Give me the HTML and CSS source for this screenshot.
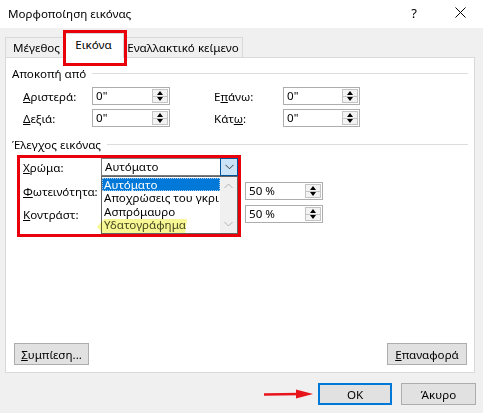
FILE: index.html
```html
<!DOCTYPE html>
<html lang="el">
<head>
<meta charset="utf-8">
<title>Μορφοποίηση εικόνας</title>
<link rel="stylesheet" href="styles.css">
</head>
<body>
<div class="titlebar">
  <div class="title">Μορφοποίηση εικόνας</div>
  <div class="tb-btn help">?</div>
  <div class="tb-btn close">
    <svg width="11" height="11" viewBox="0 0 11 11"><path d="M0.5 0.5 L10.5 10.5 M10.5 0.5 L0.5 10.5" stroke="#000" stroke-width="1" fill="none"/></svg>
  </div>
</div>

<div class="tabs">
  <div class="tab t1">Μέγεθος</div>
  <div class="tab t2 active">Εικόνα</div>
  <div class="tab t3">Εναλλακτικό κείμενο</div>
</div>

<div class="panel">
  <div class="group-head"><span>Αποκοπή από</span><div class="line"></div></div>
  <div class="crop">
    <div class="row">
      <div class="lbl l1"><u>Α</u>ριστερά:</div>
      <div class="spin-box w78"><span class="val">0"</span><div class="spin"><div class="up"><i></i></div><div class="dn"><i></i></div></div></div>
      <div class="lbl l2">Ε<u>π</u>άνω:</div>
      <div class="spin-box w77"><span class="val">0"</span><div class="spin"><div class="up"><i></i></div><div class="dn"><i></i></div></div></div>
    </div>
    <div class="row">
      <div class="lbl l1"><u>Δ</u>εξιά:</div>
      <div class="spin-box w78"><span class="val">0"</span><div class="spin"><div class="up"><i></i></div><div class="dn"><i></i></div></div></div>
      <div class="lbl l2">Κάτ<u>ω</u>:</div>
      <div class="spin-box w77"><span class="val">0"</span><div class="spin"><div class="up"><i></i></div><div class="dn"><i></i></div></div></div>
    </div>
  </div>

  <div class="group-head g2"><span>Έλεγχος εικόνας</span><div class="line"></div></div>
  <div class="ctrl">
    <div class="row r1">
      <div class="lbl l3"><u>Χ</u>ρώμα:</div>
      <div class="combo">
        <span class="combo-val">Αυτόματο</span>
        <div class="combo-btn"><svg width="9" height="6" viewBox="0 0 9 6"><path d="M0.5 0.8 L4.5 4.8 L8.5 0.8" stroke="#3c3c3c" stroke-width="1" fill="none"/></svg></div>
      </div>
    </div>
    <div class="row r2">
      <div class="lbl l3"><u>Φ</u>ωτεινότητα:</div>
      <div class="slot"></div>
      <div class="spin-box w78"><span class="val">50 %</span><div class="spin"><div class="up"><i></i></div><div class="dn"><i></i></div></div></div>
    </div>
    <div class="row r3">
      <div class="lbl l3"><u>Κ</u>οντράστ:</div>
      <div class="slot"></div>
      <div class="spin-box w78"><span class="val">50 %</span><div class="spin"><div class="up"><i></i></div><div class="dn"><i></i></div></div></div>
    </div>
  </div>

  <div class="panel-buttons">
    <div class="btn b-compress"><u>Σ</u>υμπίεση...</div>
    <div class="btn b-reset"><u>Ε</u>παναφορά</div>
  </div>
</div>

<div class="footer">
  <div class="btn ok">OK</div>
  <div class="btn cancel">Άκυρο</div>
</div>

<div class="dropdown">
  <div class="items">
    <div class="item sel">Αυτόματο</div>
    <div class="item">Αποχρώσεις του γκρι</div>
    <div class="item">Ασπρόμαυρο</div>
    <div class="item hl">Υδατογράφημα</div>
  </div>
  <div class="sbar">
    <svg width="9" height="6" viewBox="0 0 9 6"><path d="M0.5 5 L4.5 1 L8.5 5" stroke="#b4b4b4" stroke-width="1" fill="none"/></svg>
    <svg width="9" height="6" viewBox="0 0 9 6"><path d="M0.5 1 L4.5 5 L8.5 1" stroke="#b4b4b4" stroke-width="1" fill="none"/></svg>
  </div>
</div>
<div class="marker"></div>

<div class="anno-tab"></div>
<div class="anno-ctrl"></div>
<svg class="anno-arrow" width="52" height="12" viewBox="0 0 52 12">
  <path d="M0 6.5 L36 6 " stroke="#e8141c" stroke-width="2.4" fill="none"/>
  <path d="M32 1.5 L49 6 L32 10.5 Z" fill="#e8141c"/>
</svg>
</body>
</html>
```

FILE: styles.css
```css
* { box-sizing: border-box; }
body {
  margin: 0;
  width: 483px;
  height: 413px;
  overflow: hidden;
  position: relative;
  background: #f0f0f0;
  font-family: "Noto Sans", "Liberation Sans", sans-serif;
  font-size: 11.6px;
  color: #000;
}
u { text-decoration: underline; text-underline-offset: 1px; }

.titlebar {
  height: 28px;
  background: #fff;
  display: flex;
  align-items: center;
  padding-left: 8px;
}
.title { flex: 1; font-size: 11.6px; margin-top: -2px; }
.tb-btn {
  width: 46px;
  height: 28px;
  display: flex;
  align-items: center;
  justify-content: center;
}
.help { font-size: 13px; margin-top: -2px; }
.close svg { margin-top: -4px; }

.tabs {
  height: 24px;
  margin-top: 5px;
  padding-left: 5px;
  display: flex;
  align-items: flex-end;
}
.tab {
  height: 20px;
  border: 1px solid #d9d9d9;
  border-bottom: none;
  background: #f0f0f0;
  display: flex;
  align-items: center;
  justify-content: center;
  padding-bottom: 1px;
}
.t1 { width: 58px; border-right: none; padding-left: 4px; }
.t2 { width: 61px; }
.t3 { width: 119px; border-left: none; }
.tab.active {
  height: 25px;
  margin-bottom: -1px;
  background: #fff;
  position: relative;
  z-index: 1;
  padding-bottom: 3px;
}

.panel {
  margin-left: 5px;
  width: 470px;
  height: 316px;
  border: 1px solid #d9d9d9;
  background: #fff;
  padding: 8px 6px 7px 6px;
  display: flex;
  flex-direction: column;
}
.group-head {
  height: 14px;
  display: flex;
  align-items: center;
  gap: 6px;
}
.group-head .line { flex: 1; height: 1px; background: #dcdcdc; }
.g2 { margin-top: 10px; }

.crop {
  margin-top: 7px;
  padding-left: 11px;
  display: flex;
  flex-direction: column;
  gap: 4px;
}
.row { display: flex; align-items: center; height: 18px; }
.lbl { white-space: nowrap; }
.l1 { width: 69px; }
.l2 { width: 69px; margin-left: 44px; }
.l3 { width: 78px; }

.spin-box {
  height: 18px;
  border: 1px solid #adadad;
  background: #fff;
  display: flex;
  align-items: stretch;
}
.w78 { width: 78px; }
.w77 { width: 77px; }
.val { flex: 1; padding-left: 3px; line-height: 16px; }
.spin {
  width: 16px;
  margin: 1px 1px 1px 0;
  display: flex;
  flex-direction: column;
}
.spin .up, .spin .dn {
  flex: 1;
  border: 1px solid #c4c4c4;
  background: #f3f3f3;
  display: flex;
  align-items: center;
  justify-content: center;
}
.spin .dn { border-top: none; }
.spin .up i {
  width: 0; height: 0;
  border-left: 3.5px solid transparent;
  border-right: 3.5px solid transparent;
  border-bottom: 4px solid #000;
}
.spin .dn i {
  width: 0; height: 0;
  border-left: 3.5px solid transparent;
  border-right: 3.5px solid transparent;
  border-top: 4px solid #000;
}

.ctrl {
  margin-top: 7px;
  padding-left: 11px;
  display: flex;
  flex-direction: column;
}
.r2 { margin-top: 6px; }
.r3 { margin-top: 5px; }
.combo {
  width: 137px;
  height: 18px;
  border: 1px solid #7a7a7a;
  display: flex;
  align-items: stretch;
  background: #fff;
}
.combo-val { flex: 1; padding-left: 3px; line-height: 16px; }
.combo-btn {
  width: 18px;
  margin: -1px -1px -1px 0;
  border: 1px solid #005499;
  background: #cce4f7;
  display: flex;
  align-items: center;
  justify-content: center;
}
.slot { width: 137px; margin-right: 7px; }
.r1 .combo { margin-right: 7px; }

.panel-buttons {
  margin-top: auto;
  display: flex;
  justify-content: space-between;
  padding: 0 1px 0 2px;
}
.btn {
  height: 22px;
  border: 1px solid #adadad;
  background: #e1e1e1;
  display: flex;
  align-items: center;
  justify-content: center;
}
.b-compress { width: 75px; }
.b-reset { width: 80px; }

.footer {
  display: flex;
  justify-content: flex-end;
  gap: 9px;
  padding: 10px 7px 0 0;
}
.ok { width: 74px; border: 2px solid #0078d7; }
.cancel { width: 75px; }

.dropdown {
  position: absolute;
  left: 101px;
  top: 176px;
  width: 137px;
  height: 58px;
  border: 1px solid #646464;
  background: #fff;
  display: flex;
}
.items { flex: 1; padding-top: 1px; }
.item { height: 13.4px; line-height: 13px; padding-left: 2px; white-space: nowrap; }
.item.sel { background: #0078d7; color: #fff; outline: 1px dotted #9cc7ee; outline-offset: -1px; }
.item.hl { color: #4a4a3a; }
.sbar {
  width: 17px;
  background: #f0f0f0;
  display: flex;
  flex-direction: column;
  align-items: center;
  justify-content: space-between;
  padding: 6px 0 6px;
}
.marker {
  position: absolute;
  left: 97px;
  top: 219px;
  width: 90px;
  height: 14px;
  background: rgba(240, 240, 60, 0.55);
  clip-path: polygon(0 55%, 8% 0, 100% 0, 98% 100%, 6% 100%);
  mix-blend-mode: multiply;
}

.anno-tab {
  position: absolute;
  left: 63px;
  top: 30px;
  width: 64px;
  height: 36px;
  border: 3px solid #e8000b;
  z-index: 3;
}
.anno-ctrl {
  position: absolute;
  left: 17px;
  top: 155px;
  width: 224px;
  height: 82px;
  border: 3px solid #e8000b;
}
.anno-arrow {
  position: absolute;
  left: 264px;
  top: 388px;
}
```
